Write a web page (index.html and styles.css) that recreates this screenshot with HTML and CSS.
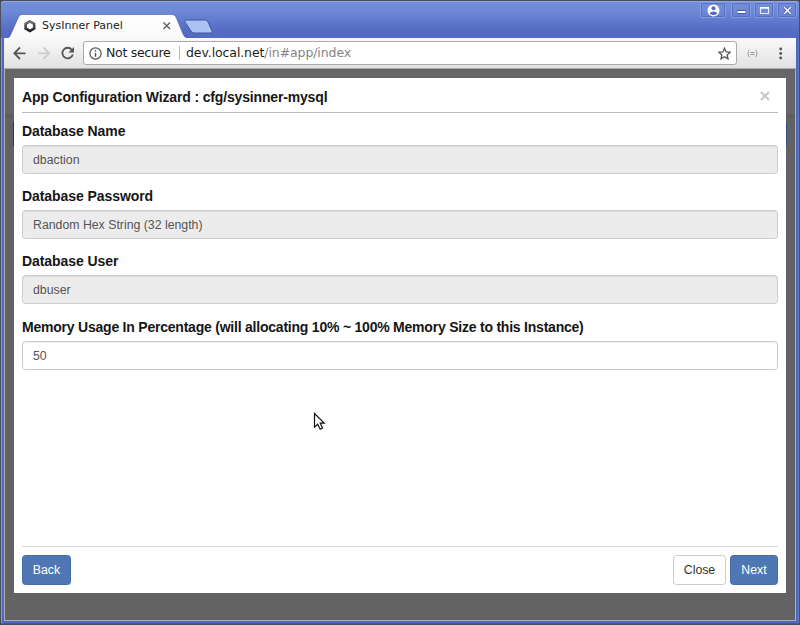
FILE: index.html
```html
<!DOCTYPE html>
<html lang="en">
<head>
<meta charset="utf-8">
<title>SysInner Panel</title>
<link rel="stylesheet" href="styles.css">
</head>
<body>
<div class="window">
  <header class="titlebar">
    <svg class="tabs" width="214" height="25" viewBox="0 0 214 25">
      <defs>
        <linearGradient id="tab" x1="0" y1="0" x2="0" y2="1"><stop offset="0" stop-color="#fff"/><stop offset="1" stop-color="#f9f9f9"/></linearGradient>
        <linearGradient id="hex" x1="0" y1="0" x2="0" y2="1"><stop offset="0" stop-color="#777"/><stop offset="1" stop-color="#222"/></linearGradient>
      </defs>
      <path d="M4 25Q6 24 7 21L14.500 4Q15.500 1.500 18 1.500H168Q171 1.500 172 4L179 21Q180 24 183 25Z" fill="url(#tab)"/>
      <path d="M4 24.500Q6 24 7 21L14.500 4Q15.500 1.500 18 1.500H168Q171 1.500 172 4L179 21Q180 24 183 24.500" fill="none" stroke="#43579f" stroke-opacity=".55"/>
      <path d="M182 7H201Q203 7 204 9L208 18Q209 20 207 20H190Q188 20 187 18L181 9Q180 7 182 7Z" fill="#aac3f2" stroke="#42579e"/>
      <path d="M25.900 8.300L30.200 10.800V15.400L25.900 17.900L21.600 15.400V10.800Z" fill="#fff" stroke="url(#hex)" stroke-width="2.600"/>
      <path d="M159.500 9.500L166 16M166 9.500L159.500 16" stroke="#666" stroke-width="1.500"/>
    </svg>
    <span class="tab-title">SysInner Panel</span>
    <div class="controls">
      <span class="control profile"><svg width="13" height="13" viewBox="0 0 13 13"><circle cx="6.500" cy="6.500" r="6" fill="#fff"/><circle cx="6.500" cy="4.300" r="2" fill="#526bbd"/><path d="M2.700 9.500Q3.500 7.500 6.500 7.500T10.300 9.500Q9 11 6.500 11T2.700 9.500Z" fill="#526bbd"/></svg></span>
      <span class="control"><svg width="13" height="13" viewBox="0 0 13 13"><path d="M2 8H11" stroke="#4359a9" stroke-width="4"/><path d="M2.500 8H10.500" stroke="#fff" stroke-width="2"/></svg></span>
      <span class="control"><svg width="13" height="13" viewBox="0 0 13 13"><path d="M2.500 4H10.500V9.500H2.500Z" fill="none" stroke="#e9edfb" stroke-width="1.200"/><path d="M2 3.800H11" stroke="#fff" stroke-width="1.500"/></svg></span>
      <span class="control"><svg width="13" height="13" viewBox="0 0 13 13"><path d="M3.300 3.300L9.700 9.700M9.700 3.300L3.300 9.700" stroke="#4359a9" stroke-width="3"/><path d="M3.300 3.300L9.700 9.700M9.700 3.300L3.300 9.700" stroke="#fff" stroke-width="1.500"/></svg></span>
    </div>
  </header>
  <nav class="toolbar">
    <svg width="78" height="30" viewBox="0 0 78 30" fill="none" stroke="#555" stroke-width="1.800">
      <path d="M21.500 15.300H10.500M16 9.500L10.300 15.300L16 21"/>
      <path d="M34 15.300H45M39.500 9.500L45.200 15.300L39.500 21" stroke="#ccc"/>
      <path d="M67.800 11.700A5.300 5.300 0 1 0 68.800 16.500"/><path d="M70 9V14.600H64.400Z" fill="#555" stroke="none"/>
    </svg>
    <div class="address">
      <svg class="info" width="13" height="13" viewBox="0 0 13 13" fill="none" stroke="#555"><circle cx="6.500" cy="6.500" r="5.600" stroke-width="1.200"/><path d="M6.500 5.700V9.700M6.500 3V4.500" stroke-width="1.400"/></svg>
      <span class="security">Not secure</span>
      <span class="url">dev.local.net<span class="path">/in#app/index</span></span>
      <svg class="star" width="13" height="13" viewBox="0 0 13 13"><path d="M6.500 1.200L8.100 4.900L12.100 5.200L9.100 7.900L10 11.900L6.500 9.800L3 11.900L3.900 7.900L.9 5.200L4.900 4.900Z" fill="none" stroke="#555" stroke-width="1.300"/></svg>
    </div>
    <svg width="59" height="30" viewBox="0 0 59 30" fill="none" stroke="#999">
      <path d="M12.500 12Q11.500 12 11.500 13.500T10.500 15.500Q11.500 15.500 11.500 17T12.500 19M18.500 12Q19.500 12 19.500 13.500T20.500 15.500Q19.500 15.500 19.500 17T18.500 19M13.500 14.500H17.500M13.500 16.500H17.500"/>
      <g fill="#555" stroke="none"><circle cx="43.700" cy="11" r="1.400"/><circle cx="43.700" cy="15.500" r="1.400"/><circle cx="43.700" cy="20" r="1.400"/></g>
    </svg>
  </nav>
  <main class="page">
    <section class="modal">
      <div class="modal-head"><h1>App Configuration Wizard : cfg/sysinner-mysql</h1>
        <svg class="dismiss" width="10" height="10" viewBox="0 0 10 10"><path d="M1 1L9 9M9 1L1 9" stroke="#c8c8c8" stroke-width="2"/></svg>
      </div>
      <div class="fields">
        <div class="field"><label>Database Name</label><div class="input disabled">dbaction</div></div>
        <div class="field"><label>Database Password</label><div class="input disabled">Random Hex String (32 length)</div></div>
        <div class="field"><label>Database User</label><div class="input disabled">dbuser</div></div>
        <div class="field"><label class="long">Memory Usage In Percentage (will allocating 10% ~ 100% Memory Size to this Instance)</label><div class="input">50</div></div>
      </div>
      <footer class="actions">
        <button class="primary back">Back</button>
        <button class="close">Close</button>
        <button class="primary next">Next</button>
      </footer>
    </section>
  </main>
</div>
<svg class="cursor" width="14" height="20" viewBox="0 0 14 20"><path d="M1.500 1.500V15.200L4.700 12.200L7.200 17.200L9.500 16L7.200 11.200H11.200Z" fill="#fff" stroke="#111" stroke-width="1.200"/></svg>
</body>
</html>
```

FILE: styles.css
```css
* { box-sizing: border-box; }
body { margin: 0; width: 800px; height: 625px; overflow: hidden; background: #45464d; font-family: "Liberation Sans", Arial, sans-serif; }
svg { display: block; flex: none; }
.window {
  height: 625px;
  display: flex;
  flex-direction: column;
  border: 1px solid #4b4e59;
  border-radius: 4px 4px 3px 3px;
  padding: 0 2px 3px;
  background: #4e68bd;
  box-shadow: inset 1px 0 #8199dd, inset -1px 0 #6078c8, inset 0 -1px #3e56a6;
}
.titlebar {
  position: relative;
  height: 37px;
  flex: none;
  margin: 0 -2px;
  padding: 12px 0 0 3px;
  display: flex;
  background: linear-gradient(#7590da, #6d88d5 30%, #566dc5 75%, #5369c2);
  border-radius: 3px 3px 0 0;
  box-shadow: inset 0 1px #91a6e5;
}
.tab-title {
  position: absolute;
  left: 41px;
  top: 18px;
  font: 11px/14px "DejaVu Sans", sans-serif;
  color: #222;
  white-space: nowrap;
}
.controls { margin: -11px 2px 0 auto; display: flex; gap: 3px; height: 17px; }
.control {
  width: 20px;
  height: 16px;
  display: flex;
  align-items: center;
  justify-content: center;
  border: 1px solid #859be0;
  border-radius: 2px;
  box-shadow: inset 0 0 0 1px #5870c3;
}
.profile { width: 26px; margin-right: 2px; }
.toolbar {
  height: 31px;
  flex: none;
  display: flex;
  margin: 0 1px;
  background: linear-gradient(#f9f9f9, #e2e2e2);
  border-bottom: 1px solid #aaa;
}
.address {
  flex: 1;
  height: 24px;
  margin: 3px 0 0 1px;
  padding: 0 5px;
  border: 1px solid #aaa;
  border-radius: 3px;
  background: #fff;
  display: flex;
  align-items: center;
  font: 12.5px/20px "DejaVu Sans", sans-serif;
  letter-spacing: -0.1px;
  color: #1d1d1d;
  white-space: nowrap;
}
.security { margin-left: 4px; width: 74px; height: 14px; line-height: 14px; border-right: 1px solid #bbb; letter-spacing: -0.3px; }
.url { margin-left: 6px; }
.path { color: #858585; }
.star { margin-left: auto; }
.page {
  flex: 1;
  margin: 0 1px;
  padding: 9px 9px 27px;
  background:
    linear-gradient(#333, #333) 8px 53px / 1px 24px no-repeat,
    linear-gradient(#334f89, #334f89) 781px 53px / 1px 24px no-repeat,
    linear-gradient(#666, #666 45px, #5b5b5b 46px, #626262 50px, #626262);
  border: solid #adb0bb;
  border-width: 0 1px 1px;
}
.modal { height: 515px; padding: 0 8px; background: #fff; display: flex; flex-direction: column; }
.modal-head { height: 35px; display: flex; justify-content: space-between; border-bottom: 1px solid #bbb; }
h1, label { margin: 0; font-weight: bold; font-size: 14px; letter-spacing: -0.07px; color: #161616; white-space: nowrap; }
h1 { line-height: 39px; letter-spacing: -0.16px; }
.dismiss { margin: 13px 8px 0 0; }
.fields { flex: 1; padding-top: 9px; }
.field { height: 65.2px; }
label { display: block; height: 23px; line-height: 18px; }
.long { letter-spacing: -0.22px; }
.input {
  height: 29px;
  padding-left: 10px;
  font-size: 12.3px;
  line-height: 28px;
  color: #555;
  border: 1px solid #ccc;
  border-radius: 3.500px;
  box-shadow: inset 0 1px 1px rgba(0, 0, 0, .07);
}
.disabled { background: #ececec; }
.actions { height: 47px; padding-top: 8px; display: flex; gap: 4px; border-top: 1px solid #d6d6d6; }
button {
  height: 30px;
  padding: 0;
  border: 1px solid #ccc;
  border-radius: 3.500px;
  background: #fff;
  color: #333;
  font: 12.3px "Liberation Sans", Arial, sans-serif;
}
.primary { background: #5077b3; border-color: #446bab; color: #fff; }
.back { width: 49px; }
.close { width: 53px; margin-left: auto; }
.next { width: 48px; }
.cursor { position: absolute; left: 313px; top: 412px; }
```
